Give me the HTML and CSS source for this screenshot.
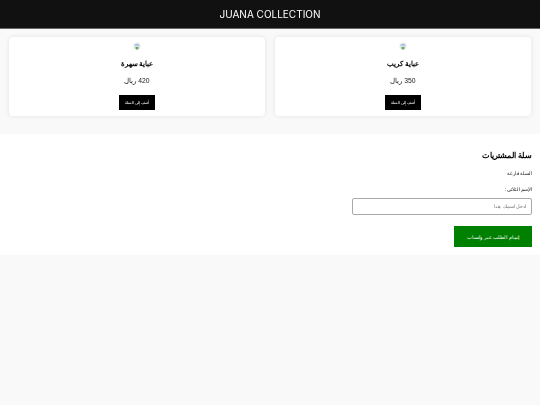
FILE: index.html
```html
<!DOCTYPE html>
<html lang="ar" dir="rtl">

<head>
    <meta charset="UTF-8">
    <meta name="viewport" content="width=device-width, initial-scale=1.0">
    <title>Juana Collection</title>

    <link rel="stylesheet" href="styles.css">
</head>

<body>

    <div class="page">

        <header class="site-header">JUANA COLLECTION</header>

        <div class="products">

            <div class="card">
                <svg class="thumb" viewBox="0 0 8 8">
                    <circle cx="4" cy="4" r="3.6" fill="#e2e8f0" />
                    <path d="M1 4 Q4 -0.4 7 4 Q4 2.8 1 4 Z" fill="#a9bbd4" />
                    <path d="M2.2 5.4 Q4 4 5.8 5.4 L5 7.4 L3 7.4 Z" fill="#62ad57" />
                </svg>
                <h3>عباية كريب</h3>
                <p>350 ريال</p>
                <button class="add-btn">أضف إلى السلة</button>
            </div>

            <div class="card">
                <svg class="thumb" viewBox="0 0 8 8">
                    <circle cx="4" cy="4" r="3.6" fill="#e2e8f0" />
                    <path d="M1 4 Q4 -0.4 7 4 Q4 2.8 1 4 Z" fill="#a9bbd4" />
                    <path d="M2.2 5.4 Q4 4 5.8 5.4 L5 7.4 L3 7.4 Z" fill="#62ad57" />
                </svg>
                <h3>عباية سهرة</h3>
                <p>420 ريال</p>
                <button class="add-btn">أضف إلى السلة</button>
            </div>

        </div>

        <section class="cart">
            <h2>سلة المشتريات</h2>
            <p class="empty">السلة فارغة</p>
            <label for="full-name">الإسم الثلاثي:</label>
            <input id="full-name" type="text" placeholder="ادخل اسمك هنا">
            <button class="order-btn">إتمام الطلب عبر واتساب</button>
        </section>

    </div>

</body>

</html>
```

FILE: styles.css
```css
*,
*::before,
*::after {
    margin: 0;
    padding: 0;
    box-sizing: border-box;
}

body {
    background-color: #f9f9f9;
    font-family: "Liberation Sans", Arial, sans-serif;
    color: #000;
}

/* the text in the screenshot is soft and has no colour fringes */
.page {
    min-height: 405px;
    filter: blur(0.3px);
}

.site-header {
    height: 29px;
    background-color: #111;
    border-bottom: 1px solid #666;
    color: #fff;
    font-family: Inter, "Liberation Sans", sans-serif;
    font-size: 10px;
    line-height: 28px;
    text-align: center;
}

.products {
    display: grid;
    grid-template-columns: 1fr 1fr;
    gap: 10px;
    padding: 8px 9px 18px;
}

.card {
    height: 79px;
    background-color: #fff;
    border-radius: 4px;
    box-shadow: 0 0 4px rgba(0, 0, 0, 0.1);
    display: flex;
    flex-direction: column;
    align-items: center;
    padding-top: 5px;
}

.thumb {
    width: 8px;
    height: 8px;
    display: block;
}

.card h3 {
    font-size: 6.7px;
    line-height: 9px;
    margin-top: 9px;
}

.card p {
    font-size: 6.8px;
    line-height: 9px;
    margin-top: 8px;
    color: #222;
}

.add-btn {
    width: 36px;
    height: 15px;
    margin-top: 10px;
    background-color: #000;
    color: #fff;
    border: none;
    font-family: "Liberation Sans", Arial, sans-serif;
    font-size: 4.2px;
}

.cart {
    background-color: #fff;
    height: 121px;
    padding: 17px 8px 0;
    display: flex;
    flex-direction: column;
    align-items: flex-start;
}

.cart h2 {
    font-size: 8px;
    line-height: 10px;
}

.empty {
    font-size: 5.2px;
    line-height: 8px;
    margin-top: 8px;
    color: #222;
}

.cart label {
    font-size: 5.3px;
    line-height: 8px;
    margin-top: 8px;
    color: #222;
}

.cart input {
    width: 180px;
    height: 17px;
    margin-top: 5px;
    border: 1px solid #aaa;
    border-radius: 2px;
    padding: 0 5px;
    font-family: "Liberation Sans", Arial, sans-serif;
    font-size: 4.8px;
}

.cart input::placeholder {
    color: #777;
}

.order-btn {
    width: 78px;
    height: 21px;
    margin-top: 11px;
    background-color: #008000;
    color: #fff;
    border: none;
    font-family: "Liberation Sans", Arial, sans-serif;
    font-size: 5px;
}
```
